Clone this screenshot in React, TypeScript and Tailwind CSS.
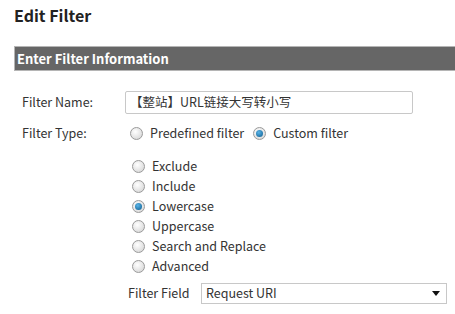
import React from "react";

function Radio({ checked }: { checked?: boolean }) {
  return (
    <span className="relative inline-flex h-[13px] w-[13px] shrink-0 items-center justify-center rounded-full border border-[#9a9a9a] bg-[radial-gradient(circle_at_40%_35%,#ffffff,#d0d0d0)]">
      {checked && (
        <span className="h-[7px] w-[7px] rounded-full bg-[radial-gradient(circle_at_40%_35%,#5ab4e8,#0a5a8c)]" />
      )}
    </span>
  );
}

function Opt({ label, checked }: { label: string; checked?: boolean }) {
  return (
    <div className="flex h-[20px] items-center">
      <Radio checked={checked} />
      <span className="ml-[7px]">{label}</span>
    </div>
  );
}

export default function App() {
  return (
    <div
      className="h-[314px] w-[455px] overflow-hidden bg-white text-[12.5px] text-[#333]"
      style={{ fontFamily: '"Noto Sans CJK SC", "Open Sans", sans-serif' }}
    >
      <div className="pl-[14px] pt-[4px] text-[16px] font-bold leading-[22px] text-[#222]">Edit Filter</div>
      <div className="ml-[14px] mt-[20px] flex h-[25px] items-center border border-r-0 border-[#b5b5b5] bg-[#666666] pl-[2px] text-[13px] font-bold text-white">
        Enter Filter Information
      </div>
      <div className="mt-[20px] flex items-center">
        <div className="w-[125px] pl-[22px]">Filter Name:</div>
        <div className="flex h-[23px] w-[288px] items-center rounded-[2px] border border-[#c8c8c8] pl-[4px]">
          【整站】URL链接大写转小写
        </div>
      </div>
      <div className="mt-[9px] flex h-[20px] items-center">
        <div className="w-[130px] pl-[22px]">Filter Type:</div>
        <Radio />
        <span className="ml-[7px]">Predefined filter</span>
        <span className="ml-[9px]" />
        <Radio checked />
        <span className="ml-[7px]">Custom filter</span>
      </div>
      <div className="mt-[13px] flex flex-col pl-[132px]">
        <Opt label="Exclude" />
        <Opt label="Include" />
        <Opt label="Lowercase" checked />
        <Opt label="Uppercase" />
        <Opt label="Search and Replace" />
        <Opt label="Advanced" />
      </div>
      <div className="mt-[7px] flex items-center">
        <div className="w-[201px] pl-[128px]">Filter Field</div>
        <div className="flex h-[21px] w-[246px] items-center justify-between border border-[#c8c8c8] pl-[4px] pr-[6px]">
          <span>Request URI</span>
          <svg width="8" height="5" viewBox="0 0 8 5"><path d="M0 0h8L4 5z" fill="#111" /></svg>
        </div>
      </div>
    </div>
  );
}
